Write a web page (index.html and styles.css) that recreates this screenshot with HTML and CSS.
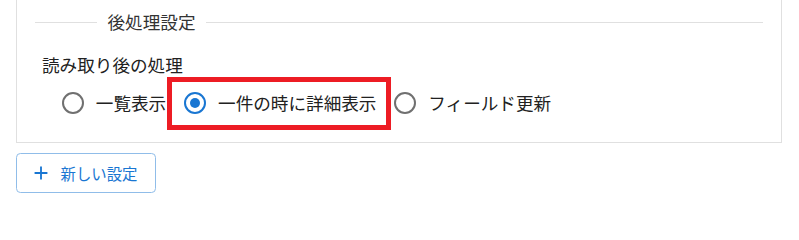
FILE: index.html
```html
<!DOCTYPE html>
<html lang="ja">
<head>
<meta charset="utf-8">
<title>後処理設定</title>
<link rel="stylesheet" href="styles.css">
</head>
<body>
<div class="card">
  <div class="divider">
    <span class="divider-line divider-line-left"></span>
    <span class="divider-text">後処理設定</span>
    <span class="divider-line divider-line-right"></span>
  </div>
  <div class="field-label">読み取り後の処理</div>
  <div class="radio-group">
    <label class="option">
      <span class="radio"></span>
      <span class="option-text">一覧表示</span>
    </label>
    <label class="option option-selected">
      <span class="radio radio-checked"><span class="radio-dot"></span></span>
      <span class="option-text">一件の時に詳細表示</span>
      <span class="highlight"></span>
    </label>
    <label class="option">
      <span class="radio"></span>
      <span class="option-text">フィールド更新</span>
    </label>
  </div>
</div>
<button class="add-button" type="button">
  <svg class="add-icon" viewBox="0 0 24 24" width="22" height="22" aria-hidden="true"><path d="M19 13h-6v6h-2v-6H5v-2h6V5h2v6h6z" fill="#1976d2"/></svg>
  <span class="add-text">新しい設定</span>
</button>
</body>
</html>
```
FILE: styles.css
```css
html, body {
  margin: 0;
  padding: 0;
  background: #ffffff;
}
body {
  font-family: "Noto Sans CJK JP", "Noto Sans", sans-serif;
  color: #212121;
  font-size: 17.6px;
}
.card {
  box-sizing: border-box;
  width: 766px;
  margin-left: 16px;
  border: 1px solid #e0e0e0;
  border-top: none;
  padding: 9px 18px 16px 18px;
}
.divider {
  display: flex;
  align-items: center;
  height: 26px;
}
.divider-line {
  height: 1px;
  background: #e0e0e0;
}
.divider-line-left {
  width: 62px;
}
.divider-line-right {
  flex: 1;
}
.divider-text {
  padding: 0 10.5px;
  line-height: 26px;
  color: #333333;
  white-space: nowrap;
}
.field-label {
  margin-top: 17px;
  padding-left: 7px;
  line-height: 26px;
  color: #212121;
}
.radio-group {
  display: flex;
  align-items: center;
  margin-top: 2px;
  padding-left: 26.5px;
  height: 46px;
}
.option {
  position: relative;
  display: flex;
  align-items: center;
  gap: 12.3px;
  margin-right: 17.6px;
  height: 46px;
}
.radio {
  box-sizing: border-box;
  width: 22px;
  height: 22px;
  border: 2px solid #707070;
  border-radius: 50%;
  display: flex;
  align-items: center;
  justify-content: center;
}
.radio-checked {
  border-color: #1976d2;
}
.radio-dot {
  width: 10px;
  height: 10px;
  border-radius: 50%;
  background: #1976d2;
}
.option-text {
  line-height: 26px;
  white-space: nowrap;
}
.highlight {
  position: absolute;
  left: -17px;
  top: -3px;
  width: 224px;
  height: 53px;
  box-sizing: border-box;
  border: 5px solid #ed1c24;
  pointer-events: none;
}
.add-button {
  box-sizing: border-box;
  display: flex;
  align-items: center;
  margin: 10px 0 0 16px;
  width: 140px;
  height: 40px;
  padding: 0 16px 0 12.5px;
  background: #ffffff;
  border: 1px solid #90bde9;
  border-radius: 4.4px;
  font-family: "Noto Sans CJK JP", "Noto Sans", sans-serif;
  font-size: 15.4px;
  color: #1976d2;
  cursor: pointer;
}
.add-icon {
  display: block;
  margin-right: 9px;
  flex: none;
}
.add-text {
  white-space: nowrap;
}
```
